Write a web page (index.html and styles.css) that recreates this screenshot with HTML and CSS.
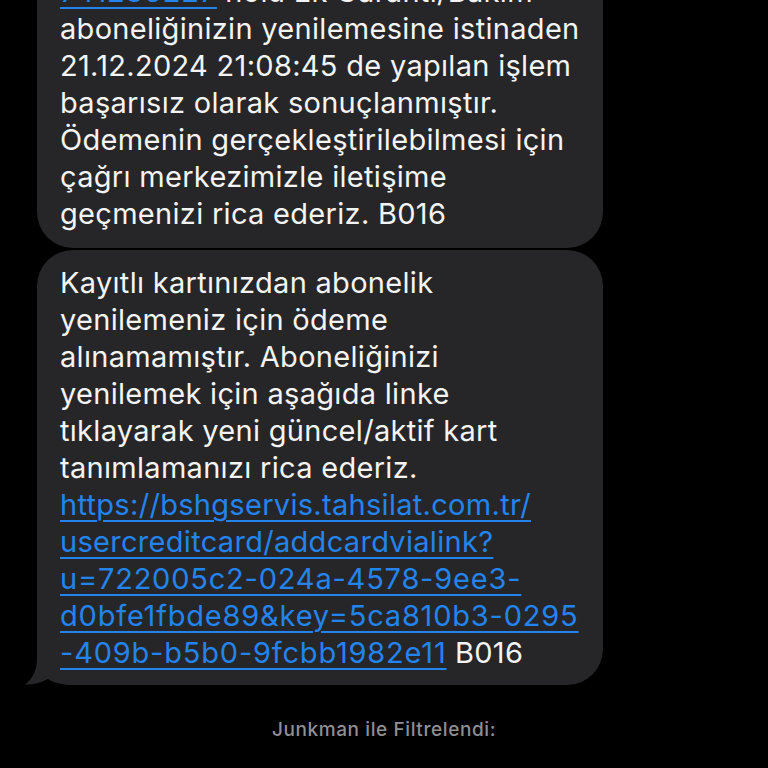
FILE: index.html
```html
<!DOCTYPE html>
<html lang="tr">
<head>
<meta charset="utf-8">
<title>Mesajlar</title>
<link rel="stylesheet" href="styles.css">
</head>
<body>
<main class="thread">
  <div class="bubble first">
    <span class="line"><a class="link num" href="#">741235227</a> nolu Ek Garanti/Bakım</span>
    <span class="line">aboneliğinizin yenilemesine istinaden</span>
    <span class="line">21.12.2024 21:08:45 de yapılan işlem</span>
    <span class="line">başarısız olarak sonuçlanmıştır.</span>
    <span class="line">Ödemenin gerçekleştirilebilmesi için</span>
    <span class="line">çağrı merkezimizle iletişime</span>
    <span class="line">geçmenizi rica ederiz. B016</span>
  </div>
  <div class="bubble last">
    <svg class="tail" width="50" height="36" viewBox="0 0 50 36" aria-hidden="true">
      <path d="M12 0 L12 10 C12 22 7 30 0 35.5 C8 36 16 33.5 23 30 C29 34 38 36 50 36 L50 0 Z" fill="#262628"/>
    </svg>
    <span class="line">Kayıtlı kartınızdan abonelik</span>
    <span class="line">yenilemeniz için ödeme</span>
    <span class="line">alınamamıştır. Aboneliğinizi</span>
    <span class="line">yenilemek için aşağıda linke</span>
    <span class="line">tıklayarak yeni güncel/aktif kart</span>
    <span class="line">tanımlamanızı rica ederiz.</span>
    <span class="line"><a class="link" href="#">https://bshgservis.tahsilat.com.tr/</a></span>
    <span class="line"><a class="link" href="#">usercreditcard/addcardvialink?</a></span>
    <span class="line"><a class="link num" href="#">u=722005c2-024a-4578-9ee3-</a></span>
    <span class="line"><a class="link num" href="#">d0bfe1fbde89&amp;key=5ca810b3-0295</a></span>
    <span class="line"><a class="link num" href="#">-409b-b5b0-9fcbb1982e11</a> B016</span>
  </div>
  <p class="filter">Junkman ile Filtrelendi:</p>
</main>
</body>
</html>
```

FILE: styles.css
```css
html, body {
  margin: 0;
  padding: 0;
  background: #000;
  height: 768px;
  overflow: hidden;
}

.thread {
  display: flex;
  flex-direction: column;
  align-items: flex-start;
  gap: 2px;
  padding-left: 37px;
  margin-top: -40px;
  font-family: Inter, "Noto Sans", "DejaVu Sans", sans-serif;
  font-feature-settings: "calt" 0;
  font-variant-ligatures: none;
}

.bubble {
  position: relative;
  box-sizing: border-box;
  width: 566px;
  padding: 13px 20px 14px 23px;
  background: #262628;
  border-radius: 36px;
  color: #f4f4f4;
  font-size: 29px;
  line-height: 37px;
  letter-spacing: 0.3px;
}

.first {
  padding-bottom: 16px;
}

.last {
  padding-top: 14px;
}

.line {
  position: relative;
  display: block;
  white-space: nowrap;
}

.link {
  color: #2384ee;
  text-decoration: underline;
  text-decoration-thickness: 2px;
  text-underline-offset: 5px;
}

.num {
  letter-spacing: 0.8px;
}

.tail {
  position: absolute;
  left: -12px;
  bottom: 0;
}

.filter {
  align-self: stretch;
  margin: 31px 0 0 -37px;
  text-align: center;
  color: #8f8f94;
  font-size: 19px;
  font-weight: 500;
  letter-spacing: 0.6px;
}
```
